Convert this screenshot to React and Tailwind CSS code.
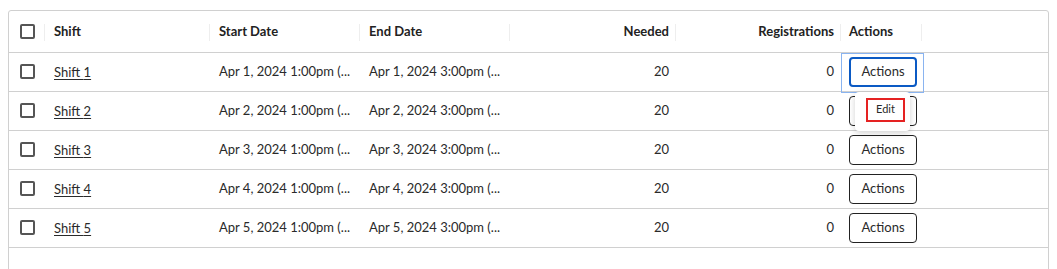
import React from "react";

const rows = [1, 2, 3, 4, 5];

function Checkbox() {
  return <div className="w-[15px] h-[15px] border-2 border-[#555] rounded-[2px] bg-white" />;
}

function Sep() {
  return <span className="absolute right-0 top-[13px] h-[17px] w-px bg-[#eeeeee]" />;
}

export default function App() {
  return (
    <div className="w-[1057px] h-[269px] bg-white overflow-hidden pt-[10px] pl-[8px]" style={{ fontFamily: "Lato, 'Open Sans', sans-serif" }}>
      <div className="w-[1041px] h-[270px] border border-[#d0d0d0] rounded-t-[3px] text-[13px] text-[#2a2a2a]">
        <table className="border-collapse table-fixed w-full">
          <colgroup>
            <col className="w-[36px]" />
            <col className="w-[165px]" />
            <col className="w-[150px]" />
            <col className="w-[150px]" />
            <col className="w-[166px]" />
            <col className="w-[165px]" />
            <col className="w-[81px]" />
            <col />
          </colgroup>
          <thead>
            <tr className="h-[41px] border-b border-[#d0d0d0] font-bold text-[#222]">
              <th className="relative pl-[11px] p-0 text-left"><Checkbox /><Sep /></th>
              <th className="relative pl-[9px] p-0 text-left font-bold">Shift<Sep /></th>
              <th className="relative pl-[9px] p-0 text-left font-bold">Start Date<Sep /></th>
              <th className="relative pl-[9px] p-0 text-left font-bold">End Date<Sep /></th>
              <th className="relative pr-[7px] p-0 text-right font-bold">Needed<Sep /></th>
              <th className="relative pr-[7px] p-0 text-right font-bold">Registrations<Sep /></th>
              <th className="relative pl-[8px] p-0 text-left font-bold">Actions<Sep /></th>
              <th className="p-0" />
            </tr>
          </thead>
          <tbody>
            {rows.map((n) => (
              <tr key={n} className="h-[39px] border-b border-[#d0d0d0]">
                <td className="pl-[11px] p-0"><Checkbox /></td>
                <td className="pl-[9px] p-0 pt-[3px]"><span className="underline underline-offset-2">Shift {n}</span></td>
                <td className="pl-[9px] p-0 pt-[1px] whitespace-nowrap">Apr {n}, 2024 1:00pm (...</td>
                <td className="pl-[9px] p-0 pt-[1px] whitespace-nowrap">Apr {n}, 2024 3:00pm (...</td>
                <td className="pr-[7px] p-0 pt-[1px] text-right">20</td>
                <td className="pr-[7px] p-0 pt-[1px] text-right">0</td>
                <td className="relative pl-[8px] p-0 pt-[1px]">
                  {n === 1 && <span className="absolute left-0 top-0 w-[83px] h-[40px] border border-[#8ab4f0]" />}
                  <button
                    className={
                      n === 1
                        ? "relative w-[68px] h-[30px] rounded-[4px] border-2 border-[#0b5ac4] bg-white text-[13px] text-[#2a2a2a]"
                        : "relative w-[68px] h-[30px] rounded-[4px] border border-[#222] bg-white text-[13px] text-[#2a2a2a]"
                    }
                  >
                    Actions
                  </button>
                  {n === 1 && (
                    <div className="absolute left-[14px] top-[39px] w-[55px] h-[39px] bg-white rounded-[4px] shadow-[0_2px_6px_rgba(0,0,0,0.18)] z-10 pt-[6px] pl-[11px]">
                      <div className="w-[39px] h-[24px] border-2 border-[#e52222] flex items-center justify-center text-[11px] text-[#2a2a2a]">
                        Edit
                      </div>
                    </div>
                  )}
                </td>
                <td className="p-0" />
              </tr>
            ))}
          </tbody>
        </table>
      </div>
    </div>
  );
}
